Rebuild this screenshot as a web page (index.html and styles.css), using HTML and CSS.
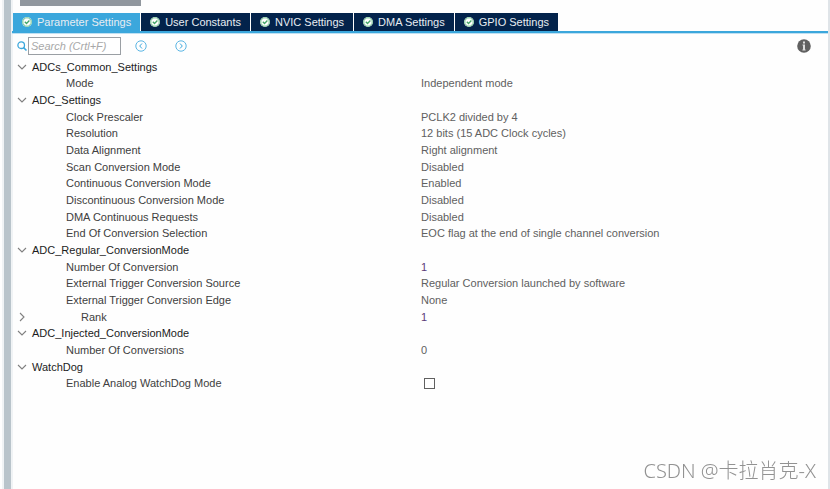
FILE: index.html
```html
<!DOCTYPE html>
<html lang="en">
<head>
<meta charset="utf-8">
<title>ADC Configuration</title>
<link rel="stylesheet" href="styles.css">
</head>
<body>
<svg class="defs" width="0" height="0" aria-hidden="true">
  <symbol id="ok" viewBox="0 0 10 10"><circle cx="5" cy="5" r="5" fill="#e4f5e8"/><circle cx="5" cy="5" r="4.2" fill="#fff" stroke="#6cc08a" stroke-width=".9"/><path d="M2.8 4.8 4.5 6.5 7.4 3.5" fill="none" stroke="#43a567" stroke-width="1.3"/></symbol>
  <symbol id="down" viewBox="0 0 10 10"><path d="M1 3 5 7 9 3" fill="none" stroke="#808080" stroke-width="1.1"/></symbol>
  <symbol id="right" viewBox="0 0 10 10"><path d="M3 1 7 5 3 9" fill="none" stroke="#808080" stroke-width="1.1"/></symbol>
</svg>
<div class="panel">
  <div class="heading"></div>
  <nav class="tabs">
    <button class="tab active"><svg><use href="#ok"/></svg>Parameter Settings</button>
    <button class="tab"><svg><use href="#ok"/></svg>User Constants</button>
    <button class="tab"><svg><use href="#ok"/></svg>NVIC Settings</button>
    <button class="tab"><svg><use href="#ok"/></svg>DMA Settings</button>
    <button class="tab"><svg><use href="#ok"/></svg>GPIO Settings</button>
  </nav>
  <div class="toolbar">
    <label class="search">
      <svg viewBox="0 0 10 10" aria-hidden="true"><circle cx="4.2" cy="4.2" r="3.3" fill="none" stroke="#3ba7dc" stroke-width="1.3"/><path d="M6.6 6.6 9.5 9.5" stroke="#3ba7dc" stroke-width="1.5"/></svg>
      <input type="text" placeholder="Search (Crtl+F)" aria-label="Search">
    </label>
    <button class="step" aria-label="Previous"><svg viewBox="0 0 12 12"><circle cx="6" cy="6" r="5.2" fill="none" stroke="#5cb6e4"/><path d="M7 3.5 4.7 6 7 8.5" fill="none" stroke="#3ba7dc"/></svg></button>
    <button class="step" aria-label="Next"><svg viewBox="0 0 12 12"><circle cx="6" cy="6" r="5.2" fill="none" stroke="#5cb6e4"/><path d="M5 3.5 7.3 6 5 8.5" fill="none" stroke="#3ba7dc"/></svg></button>
    <button class="info" aria-label="Information"><svg viewBox="0 0 14 14"><circle cx="7" cy="7" r="6.8" fill="#606060"/><path d="M6 2.5h2v2H6zM5.5 5.5H8v5h.6v1H5.4v-1H6v-4h-.5z" fill="#ddd"/></svg></button>
  </div>
  <table class="params">
    <colgroup><col class="col-arrow"><col class="col-name"><col></colgroup>
    <tbody>
      <tr class="group"><td><svg><use href="#down"/></svg></td><th colspan="2">ADCs_Common_Settings</th></tr>
      <tr><td></td><th>Mode</th><td>Independent mode</td></tr>
      <tr class="group"><td><svg><use href="#down"/></svg></td><th colspan="2">ADC_Settings</th></tr>
      <tr><td></td><th>Clock Prescaler</th><td>PCLK2 divided by 4</td></tr>
      <tr><td></td><th>Resolution</th><td>12 bits (15 ADC Clock cycles)</td></tr>
      <tr><td></td><th>Data Alignment</th><td>Right alignment</td></tr>
      <tr><td></td><th>Scan Conversion Mode</th><td>Disabled</td></tr>
      <tr><td></td><th>Continuous Conversion Mode</th><td>Enabled</td></tr>
      <tr><td></td><th>Discontinuous Conversion Mode</th><td>Disabled</td></tr>
      <tr><td></td><th>DMA Continuous Requests</th><td>Disabled</td></tr>
      <tr><td></td><th>End Of Conversion Selection</th><td>EOC flag at the end of single channel conversion</td></tr>
      <tr class="group"><td><svg><use href="#down"/></svg></td><th colspan="2">ADC_Regular_ConversionMode</th></tr>
      <tr><td></td><th>Number Of Conversion</th><td class="number">1</td></tr>
      <tr><td></td><th>External Trigger Conversion Source</th><td>Regular Conversion launched by software</td></tr>
      <tr><td></td><th>External Trigger Conversion Edge</th><td>None</td></tr>
      <tr class="nested"><td><svg><use href="#right"/></svg></td><th>Rank</th><td class="number">1</td></tr>
      <tr class="group"><td><svg><use href="#down"/></svg></td><th colspan="2">ADC_Injected_ConversionMode</th></tr>
      <tr><td></td><th>Number Of Conversions</th><td>0</td></tr>
      <tr class="group"><td><svg><use href="#down"/></svg></td><th colspan="2">WatchDog</th></tr>
      <tr><td></td><th><label for="awd">Enable Analog WatchDog Mode</label></th><td><input type="checkbox" id="awd"></td></tr>
    </tbody>
  </table>
</div>
<div class="watermark">CSDN @卡拉肖克-X</div>
</body>
</html>
```
FILE: styles.css
```css
* { box-sizing: border-box; }
body {
  margin: 0;
  min-height: 100vh;
  display: flex;
  background: #fefefe;
  font: 11px/16px "Liberation Sans", Arial, sans-serif;
  color: #404040;
}
button { border: 0; padding: 0; background: none; font: inherit; }
svg { display: block; flex: none; }
.defs { position: absolute; }
.panel {
  flex: 1;
  margin-left: 2px;
  border: solid #f0f3f5;
  border-width: 0 2px;
  border-right-color: #dfe4e8;
  box-shadow: inset 7px 0 #b9c4cb, inset 9px 0 #f0f3f5;
  padding-left: 8px;
}
.heading { width: 121px; height: 6px; margin-left: 8px; background: #91979e; }
.tabs {
  display: flex;
  gap: 1px;
  margin-top: 7px;
  padding-left: 1px;
  border-bottom: 2px solid #3ba7dc;
  box-shadow: 0 1px #bfe0f2;
}
.tab {
  display: flex;
  align-items: center;
  gap: 5px;
  height: 18px;
  padding: 0 9px;
  background: #03234b;
  color: #e8edf2;
}
.tab svg { width: 10px; height: 10px; }
.tab.active { background: #3ba7dc; }
.toolbar {
  display: flex;
  align-items: center;
  height: 25px;
  padding: 1px 17px 0 5px;
}
.search { display: flex; align-items: center; gap: 1px; margin-right: 14px; }
.search svg { width: 10px; height: 10px; }
.search input {
  width: 93px;
  height: 18px;
  padding: 0 2px;
  border: 1px solid #9a9fa4;
  font: inherit;
}
.search input::placeholder { color: #a8a8a8; font-style: italic; opacity: 1; }
.step { margin-right: 28px; }
.step svg { width: 12px; height: 12px; }
.info { margin-left: auto; }
.info svg { width: 14px; height: 14px; }
.params {
  width: 100%;
  table-layout: fixed;
  border-collapse: collapse;
  line-height: 16px;
}
.col-arrow { width: 20px; }
.col-name { width: 389px; }
.params tr { height: 17px; }
.params tr:nth-child(3n+2) { height: 16px; }
.params td, .params th { padding: 0; text-align: left; font-weight: normal; }
.params td { color: #606060; }
.params td svg { width: 10px; height: 10px; margin-left: 5px; }
.params th { padding-left: 34px; }
.params .group th { padding-left: 0; color: #1c1c1c; }
.params .nested th { padding-left: 49px; }
.params .number { color: #5c3a78; }
.params input {
  appearance: none;
  display: block;
  width: 11px;
  height: 11px;
  margin: 0 3px;
  border: 1px solid #606060;
  background: #fff;
}
.watermark {
  position: fixed;
  right: 14px;
  bottom: 6px;
  font: 20px/24px "Noto Sans", "Noto Sans CJK SC", sans-serif;
  font-weight: 300;
  color: #929292;
}
```
